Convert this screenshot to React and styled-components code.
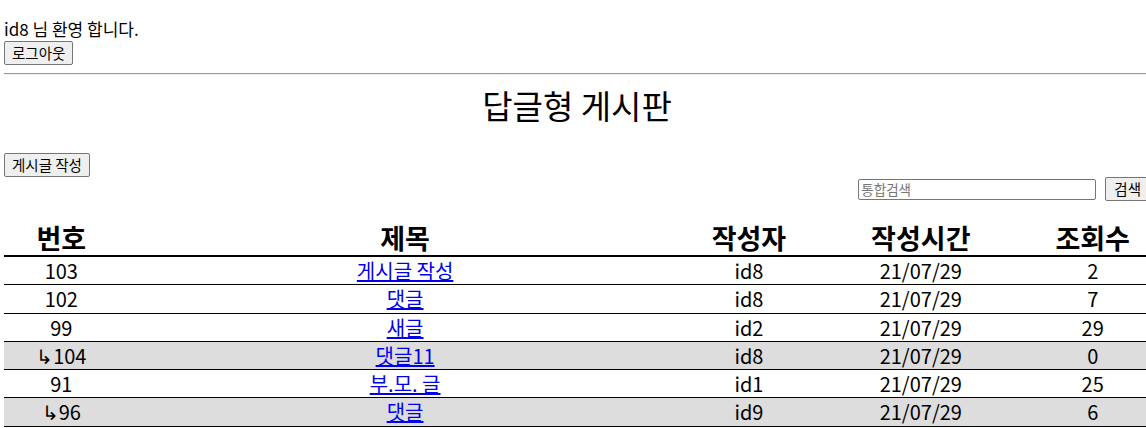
import React from "react";
import styled, { createGlobalStyle } from "styled-components";

const FONT = `"Noto Sans CJK KR", "Noto Sans", sans-serif`;

const Global = createGlobalStyle`
  html, body { margin: 0; padding: 0; overflow: hidden; background: #fff; }
  body { font-family: ${FONT}; color: #000; }
`;

const Page = styled.div`
  width: 1146px;
  padding: 18px 0 0 4px;
`;

const Welcome = styled.div`
  font-size: 17px;
  line-height: 22px;
`;

const Btn = styled.button`
  font-family: ${FONT};
  font-size: 14.5px;
  line-height: 18px;
  padding: 2px ${(p) => (p.$wide ? "8px" : "7px")};
  border: 1px solid #767676;
  border-radius: 2px;
  background: #efefef;
  color: #000;
  cursor: pointer;
`;

const Rule = styled.hr`
  margin: 8px 0 0;
  border: 0;
  border-top: 1px solid #9a9a9a;
  border-bottom: 1px solid #eee;
`;

const Title = styled.h1`
  margin: 8px 0 0;
  text-align: center;
  font-size: 33px;
  font-weight: normal;
  line-height: 44px;
`;

const WriteRow = styled.div`
  margin-top: 25px;
`;

const SearchRow = styled.div`
  display: flex;
  justify-content: flex-end;
  align-items: center;
  gap: 9px;
  margin-top: 0;
`;

const SearchInput = styled.input`
  width: 232px;
  height: 17px;
  font-family: ${FONT};
  font-size: 13.5px;
  padding: 1px 2px;
  border: 1px solid #767676;
  border-radius: 2px;
  &::placeholder { color: #757575; }
`;

const Table = styled.table`
  width: 100%;
  border-collapse: collapse;
  margin-top: 20px;
`;

const Th = styled.th`
  font-size: 27px;
  font-weight: bold;
  line-height: 34px;
  padding: 0;
  border-bottom: 2px solid #000;
  width: ${(p) => p.$w};
`;

const Tr = styled.tr`
  background: ${(p) => (p.$reply ? "#dddddd" : "#fff")};
`;

const Td = styled.td`
  font-size: 20px;
  line-height: 27.3px;
  text-align: center;
  padding: 0;
  border-bottom: 1px solid #000;
`;

const Link = styled.a`
  color: #0000ee;
  text-decoration: underline;
`;

const rows = [
  { no: "103", title: "게시글 작성", writer: "id8", views: "2" },
  { no: "102", title: "댓글", writer: "id8", views: "7" },
  { no: "99", title: "새글", writer: "id2", views: "29" },
  { no: "104", title: "댓글11", writer: "id8", views: "0", reply: true },
  { no: "91", title: "부.모. 글", writer: "id1", views: "25" },
  { no: "96", title: "댓글", writer: "id9", views: "6", reply: true },
];

export default function App() {
  return (
    <Page>
      <Global />
      <Welcome>id8 님 환영 합니다.</Welcome>
      <Btn>로그아웃</Btn>
      <Rule />
      <Title>답글형 게시판</Title>
      <WriteRow>
        <Btn>게시글 작성</Btn>
      </WriteRow>
      <SearchRow>
        <SearchInput placeholder="통합검색" />
        <Btn $wide>검색</Btn>
      </SearchRow>
      <Table>
        <thead>
          <tr>
            <Th $w="10%">번호</Th>
            <Th $w="50%">제목</Th>
            <Th $w="10%">작성자</Th>
            <Th $w="20%">작성시간</Th>
            <Th $w="10%">조회수</Th>
          </tr>
        </thead>
        <tbody>
          {rows.map((r, i) => (
            <Tr key={i} $reply={r.reply}>
              <Td>{r.reply ? "↳" : ""}{r.no}</Td>
              <Td>
                <Link href="#">{r.title}</Link>
              </Td>
              <Td>{r.writer}</Td>
              <Td>21/07/29</Td>
              <Td>{r.views}</Td>
            </Tr>
          ))}
        </tbody>
      </Table>
    </Page>
  );
}
